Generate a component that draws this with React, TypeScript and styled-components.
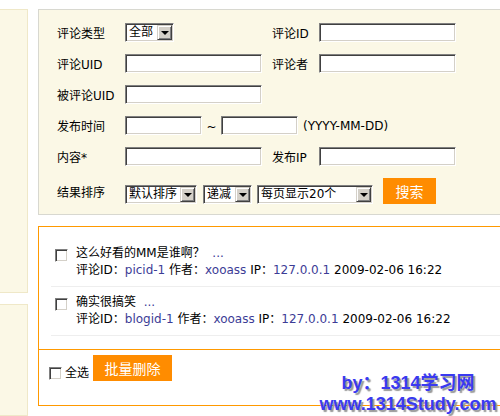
import React, { FC } from "react";
import styled, { createGlobalStyle } from "styled-components";

const colors = {
  cream: "#fbf8e6",
  creamBorder: "#d8d8d0",
  sideBorder: "#efe8c8",
  orange: "#ff9900",
  button: "#ff8c00",
  link: "#3c3c96",
  winGray: "#d4d0c8",
};

const fontStack = `"DejaVu Sans", "Noto Sans CJK SC", sans-serif`;

const GlobalStyle = createGlobalStyle`
  html, body {
    margin: 0;
    padding: 0;
    background: #fff;
    overflow: hidden;
  }
  body {
    font-family: ${fontStack};
    font-size: 12px;
    color: #000;
  }
`;

const Page = styled.div`
  position: relative;
  display: flex;
  gap: 10px;
  padding-top: 9px;
  width: 560px;
  height: 416px;
  box-sizing: border-box;
`;

const Sidebar = styled.div`
  display: flex;
  flex-direction: column;
  gap: 11px;
  width: 28px;
  flex: none;
`;

const SideBlock = styled.div<{ $h: number }>`
  height: ${(p) => p.$h}px;
  background: ${colors.cream};
  border: 1px solid ${colors.sideBorder};
  border-left: none;
  box-sizing: border-box;
`;

const Main = styled.div`
  display: flex;
  flex-direction: column;
  gap: 11px;
  width: 500px;
  flex: none;
`;

const FilterPanel = styled.div`
  background: ${colors.cream};
  border: 1px solid ${colors.creamBorder};
  padding: 13px 0 10px 18px;
  display: flex;
  flex-direction: column;
  gap: 12px;
`;

const Row = styled.div<{ $h?: number; $end?: boolean }>`
  display: flex;
  align-items: ${(p) => (p.$end ? "flex-end" : "center")};
  height: ${(p) => p.$h ?? 19}px;
`;

const Label = styled.div<{ $w: number }>`
  width: ${(p) => p.$w}px;
  flex: none;
  white-space: nowrap;
  align-self: center;
`;

const FieldCell = styled.div`
  width: 147px;
  flex: none;
  display: flex;
  align-items: center;
`;

const Input = styled.div<{ $w: number }>`
  width: ${(p) => p.$w}px;
  height: 19px;
  box-sizing: border-box;
  flex: none;
  background: #fff;
  border-top: 1px solid #808080;
  border-left: 1px solid #808080;
  border-bottom: 1px solid #fff;
  border-right: 1px solid #fff;
  box-shadow: inset 1px 1px 0 #404040, inset -1px -1px 0 ${colors.winGray};
`;

const Select = styled.div<{ $w: number; $gap?: number }>`
  width: ${(p) => p.$w}px;
  height: 19px;
  box-sizing: border-box;
  flex: none;
  margin-right: ${(p) => p.$gap ?? 0}px;
  display: flex;
  align-items: stretch;
  background: #fff;
  padding: 1px;
  border-top: 1px solid #808080;
  border-left: 1px solid #808080;
  border-bottom: 1px solid #fff;
  border-right: 1px solid #fff;
  box-shadow: inset 1px 1px 0 #404040, inset -1px -1px 0 ${colors.winGray};
`;

const SelectText = styled.span`
  flex: 1;
  padding-left: 2px;
  line-height: 15px;
  white-space: nowrap;
  overflow: hidden;
`;

const SelectArrow = styled.span`
  width: 15px;
  flex: none;
  box-sizing: border-box;
  background: ${colors.winGray};
  border-top: 1px solid ${colors.winGray};
  border-left: 1px solid ${colors.winGray};
  border-bottom: 1px solid #404040;
  border-right: 1px solid #404040;
  box-shadow: inset 1px 1px 0 #fff, inset -1px -1px 0 #808080;
  display: flex;
  align-items: center;
  justify-content: center;

  &::after {
    content: "";
    border-left: 4px solid transparent;
    border-right: 4px solid transparent;
    border-top: 4px solid #000;
    margin-top: 1px;
  }
`;

const Tilde = styled.span`
  width: 19px;
  text-align: center;
  flex: none;
  padding-top: 3px;
`;

const Hint = styled.span`
  margin-left: 5px;
  white-space: nowrap;
`;

const OrangeButton = styled.button<{ $w: number }>`
  width: ${(p) => p.$w}px;
  height: 26px;
  flex: none;
  border: none;
  padding: 0;
  background: ${colors.button};
  color: #fff;
  font-family: ${fontStack};
  font-size: 14px;
  cursor: pointer;
`;

const ListPanel = styled.div`
  border: 1px solid ${colors.orange};
  display: flex;
  flex-direction: column;
`;

const Items = styled.div`
  padding: 11px 0 13px 12px;
`;

const Item = styled.div`
  display: flex;
  gap: 8px;
  padding: 7px 0 7px 4px;
  line-height: 17px;
  border-bottom: 1px solid #eee;
  white-space: nowrap;
`;

const Check = styled.span`
  width: 13px;
  height: 13px;
  box-sizing: border-box;
  flex: none;
  margin-top: 4px;
  background: #fff;
  border-top: 1px solid #808080;
  border-left: 1px solid #808080;
  border-bottom: 1px solid #fff;
  border-right: 1px solid #fff;
  box-shadow: inset 1px 1px 0 #404040, inset -1px -1px 0 ${colors.winGray};
`;

const ItemBody = styled.div`
  display: flex;
  flex-direction: column;
`;

const Link = styled.span`
  color: ${colors.link};
`;

const Footer = styled.div`
  border-top: 1px solid ${colors.orange};
  display: flex;
  align-items: flex-start;
  padding: 5px 10px 24px;
`;

const SelectAll = styled.label`
  display: flex;
  align-items: flex-end;
  gap: 3px;
  margin-top: 11px;
  margin-right: 4px;
  line-height: 14px;

  ${Check} {
    margin-top: 0;
  }
`;

const Watermark = styled.div`
  position: absolute;
  left: 316px;
  top: 373px;
  width: 184px;
  text-align: center;
  font-family: "Liberation Sans", "Noto Sans CJK SC", sans-serif;
  font-weight: 700;
  font-size: 18px;
  line-height: 21px;
  color: #3a3af0;
  text-shadow: 2px 2px 1px #999;
  white-space: nowrap;
`;

type Comment = { text: string; id: string };

const comments: Comment[] = [
  { text: "这么好看的MM是谁啊？", id: "picid-1" },
  { text: "确实很搞笑", id: "blogid-1" },
];

const Dropdown: FC<{ w: number; text: string; gap?: number }> = ({ w, text, gap }) => (
  <Select $w={w} $gap={gap}>
    <SelectText>{text}</SelectText>
    <SelectArrow />
  </Select>
);

const App: FC = () => (
  <>
    <GlobalStyle />
    <Page>
      <Sidebar>
        <SideBlock $h={306} />
        <SideBlock $h={120} />
      </Sidebar>
      <Main>
        <FilterPanel>
          <Row>
            <Label $w={68}>评论类型</Label>
            <FieldCell>
              <Dropdown w={49} text="全部" />
            </FieldCell>
            <Label $w={47}>评论ID</Label>
            <Input $w={137} />
          </Row>
          <Row>
            <Label $w={68}>评论UID</Label>
            <FieldCell>
              <Input $w={137} />
            </FieldCell>
            <Label $w={47}>评论者</Label>
            <Input $w={137} />
          </Row>
          <Row>
            <Label $w={68}>被评论UID</Label>
            <FieldCell>
              <Input $w={137} />
            </FieldCell>
          </Row>
          <Row>
            <Label $w={68}>发布时间</Label>
            <Input $w={77} />
            <Tilde>~</Tilde>
            <Input $w={77} />
            <Hint>(YYYY-MM-DD)</Hint>
          </Row>
          <Row>
            <Label $w={68}>内容*</Label>
            <FieldCell>
              <Input $w={137} />
            </FieldCell>
            <Label $w={47}>发布IP</Label>
            <Input $w={137} />
          </Row>
          <Row $h={26} $end>
            <Label $w={68}>结果排序</Label>
            <Dropdown w={72} text="默认排序" gap={6} />
            <Dropdown w={49} text="递减" gap={5} />
            <Dropdown w={116} text="每页显示20个" gap={10} />
            <OrangeButton $w={53}>搜索</OrangeButton>
          </Row>
        </FilterPanel>

        <ListPanel>
          <Items>
            {comments.map((c) => (
              <Item key={c.id}>
                <Check />
                <ItemBody>
                  <div>
                    {c.text} <Link>&nbsp;...</Link>
                  </div>
                  <div>
                    评论ID：<Link>{c.id}</Link> 作者：<Link>xooass</Link> IP：
                    <Link>127.0.0.1</Link> 2009-02-06 16:22
                  </div>
                </ItemBody>
              </Item>
            ))}
          </Items>
          <Footer>
            <SelectAll>
              <Check />
              全选
            </SelectAll>
            <OrangeButton $w={79}>批量删除</OrangeButton>
          </Footer>
        </ListPanel>
      </Main>
      <Watermark>
        by：1314学习网
        <br />
        www.1314Study.com
      </Watermark>
    </Page>
  </>
);

export default App;
